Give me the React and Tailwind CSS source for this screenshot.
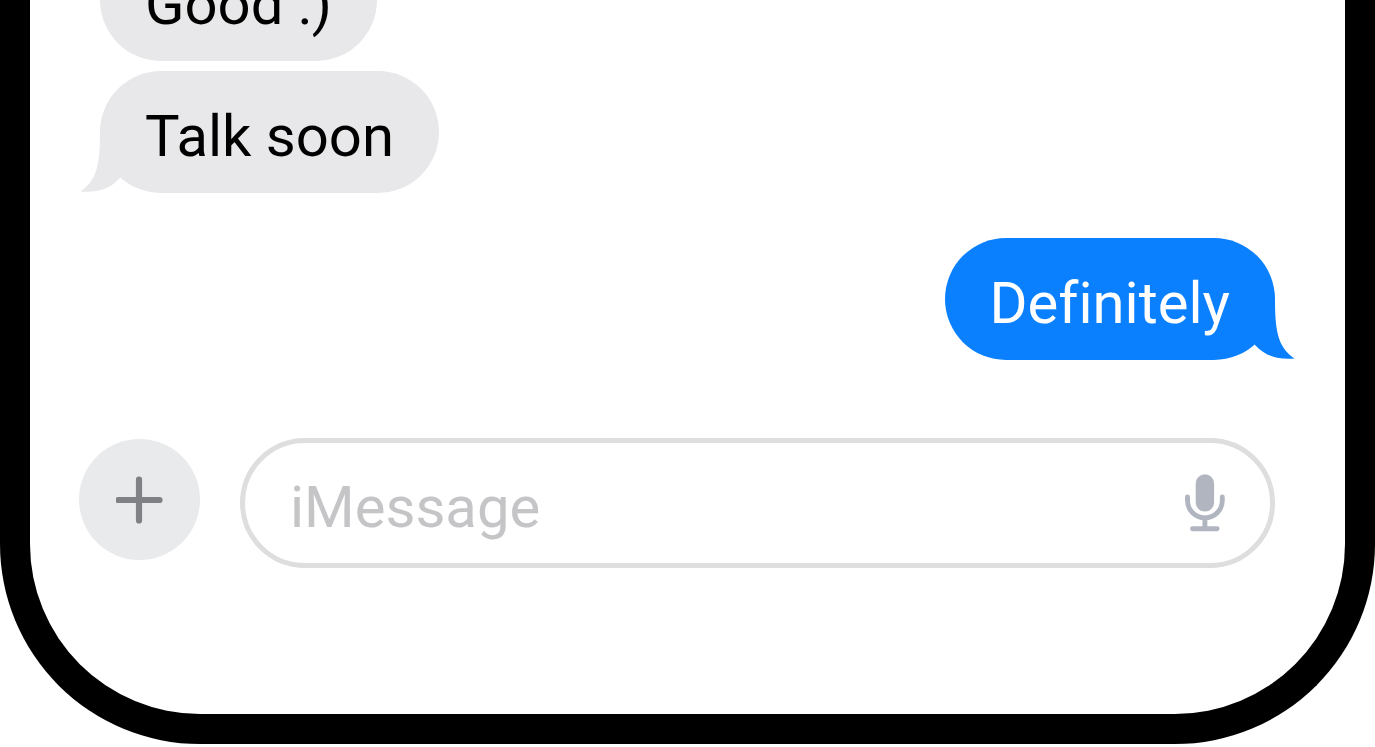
import React from "react";

const messages = [
    { id: 1, text: "Good :)", from: "them", tail: false },
    { id: 2, text: "Talk soon", from: "them", tail: true },
    { id: 3, text: "Definitely", from: "me", tail: true },
];

function Tail({ mine }) {
    return (
        <svg
            viewBox="0 0 60 63"
            aria-hidden="true"
            className={`absolute bottom-0 h-[63px] w-[60px] ${mine ? "-right-5 -scale-x-100 text-[#0a80ff]" : "-left-5 text-[#e8e8ea]"}`}
        >
            <path d="M20 0C20 32 18 50 0.5 61.5C17 63 30 59 40 48L60 0Z" fill="currentColor" />
        </svg>
    );
}

function Bubble({ message }) {
    const mine = message.from === "me";
    return (
        <li
            className={`relative flex h-[122px] items-center rounded-full px-[45px] ${mine ? "mt-[35px] self-end bg-[#0a80ff] text-white" : "self-start bg-[#e8e8ea] text-black"}`}
        >
            {message.tail && <Tail mine={mine} />}
            <span className="relative pt-2 whitespace-nowrap">{message.text}</span>
        </li>
    );
}

function PlusIcon() {
    return (
        <svg viewBox="0 0 48 48" className="size-12" aria-hidden="true">
            <path d="M23 3.5V44.5M2.5 24H43.5" fill="none" stroke="#7f8185" strokeWidth="6.2" strokeLinecap="round" />
        </svg>
    );
}

function MicIcon() {
    return (
        <svg viewBox="0 0 40 58" className="h-[58px] w-10" aria-hidden="true">
            <rect x="10.7" y="0.2" width="18.4" height="37.4" rx="9.2" fill="#b1b5bf" />
            <path
                d="M2.5 23V26.5A17.4 17.4 0 0 0 37.3 26.5V23M19.9 44V54M7.5 54.8H32.1"
                fill="none"
                stroke="#b1b5bf"
                strokeWidth="4.9"
                strokeLinecap="round"
            />
        </svg>
    );
}

export default function App() {
    return (
        <div className="flex min-h-screen flex-col overflow-hidden bg-white font-['Roboto','Liberation_Sans',sans-serif] text-[58px] leading-none [font-variant-ligatures:none]">
            <main className="flex flex-col rounded-b-[200px] border-x-[30px] border-b-[30px] border-black bg-white pr-[70px] pb-[146px] pl-[49px]">
                {/* Messages, scrolled to the latest */}
                <ul className="-mt-[61px] ml-[21px] flex flex-col gap-[10px]">
                    {messages.map((message) => (
                        <Bubble key={message.id} message={message} />
                    ))}
                </ul>

                {/* Composer */}
                <form className="mt-[78px] flex items-center gap-10" onSubmit={(e) => e.preventDefault()}>
                    <button
                        type="button"
                        aria-label="Add attachment"
                        className="mb-[8px] flex size-[121px] shrink-0 items-center justify-center rounded-full bg-[#e8eaec] pt-0.5"
                    >
                        <PlusIcon />
                    </button>
                    <div className="flex h-[130px] min-w-0 flex-1 items-center rounded-full border-[5px] border-[#dedede] pr-[45px] pl-[45px]">
                        <input
                            type="text"
                            aria-label="iMessage"
                            placeholder="iMessage"
                            className="h-full min-w-0 flex-1 bg-transparent pt-2 text-black outline-none placeholder:text-[#c5c5c7]"
                        />
                        <button type="button" aria-label="Record audio" className="shrink-0">
                            <MicIcon />
                        </button>
                    </div>
                </form>
            </main>
        </div>
    );
}
